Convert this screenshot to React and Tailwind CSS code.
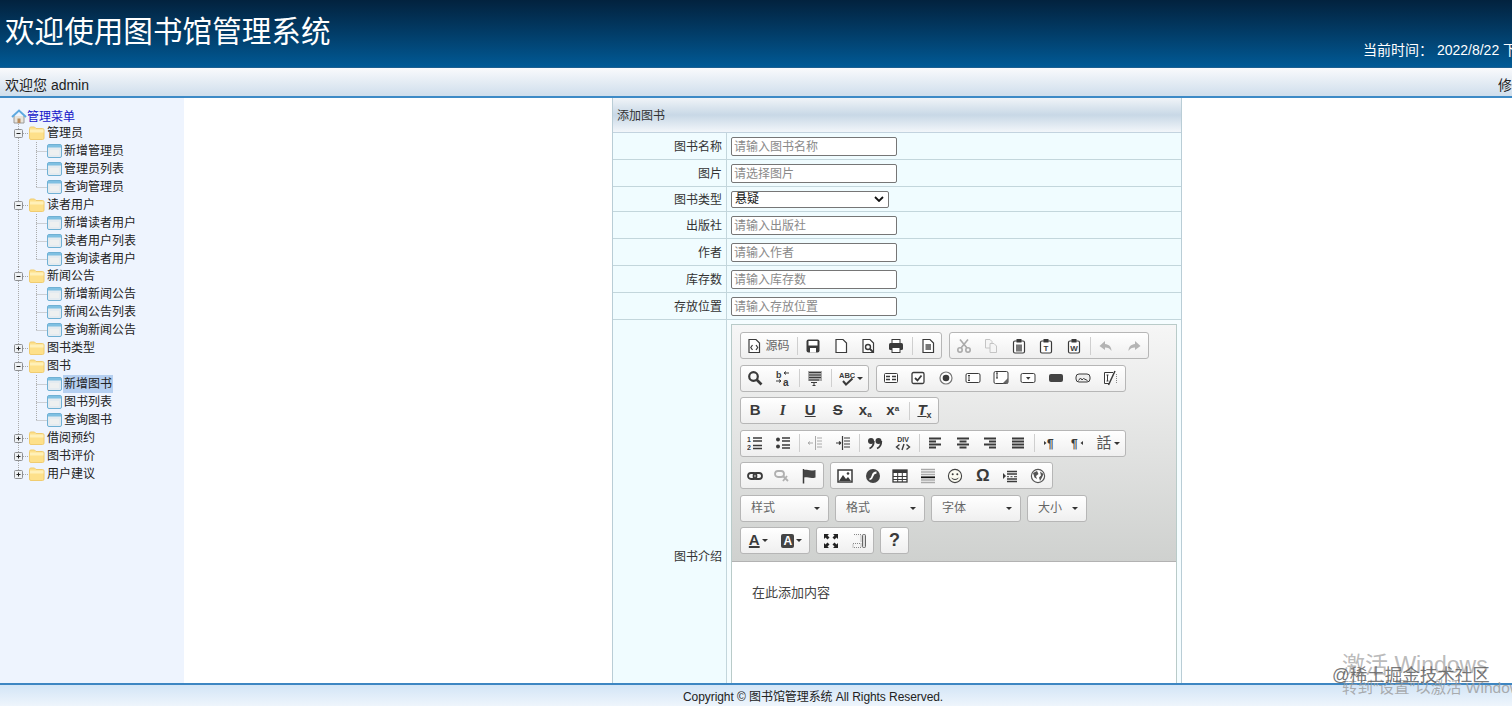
import React from "react";

const fontStack = "font-['Liberation_Sans','Noto_Sans_CJK_SC',sans-serif]";

const menu = [
  { name: "管理员", open: true, items: ["新增管理员", "管理员列表", "查询管理员"] },
  { name: "读者用户", open: true, items: ["新增读者用户", "读者用户列表", "查询读者用户"] },
  { name: "新闻公告", open: true, items: ["新增新闻公告", "新闻公告列表", "查询新闻公告"] },
  { name: "图书类型" },
  { name: "图书", open: true, items: ["新增图书", "图书列表", "查询图书"] },
  { name: "借阅预约" },
  { name: "图书评价" },
  { name: "用户建议", last: true },
];

const fields = [
  { label: "图书名称", hint: "请输入图书名称" },
  { label: "图片", hint: "请选择图片" },
  { label: "图书类型", select: true },
  { label: "出版社", hint: "请输入出版社" },
  { label: "作者", hint: "请输入作者" },
  { label: "库存数", hint: "请输入库存数" },
  { label: "存放位置", hint: "请输入存放位置" },
];

function Folder() {
  return (
    <svg width="16" height="14" viewBox="0 0 16 14" className="shrink-0">
      <path d="M0.5 2.5 Q0.5 1 2 1 H5.5 L7 2.5 H13.5 Q15 2.5 15 4 V12 Q15 13.5 13.5 13.5 H2 Q0.5 13.5 0.5 12 Z" fill="#fde08a" stroke="#f0cc70" />
      <rect x="1" y="3.5" width="13.5" height="3" fill="#fff0b8" />
    </svg>
  );
}

function Leaf() {
  return (
    <svg width="15" height="14" viewBox="0 0 15 14" className="shrink-0">
      <rect x="0.5" y="0.5" width="14" height="13" rx="1.5" fill="#e4ebf0" stroke="#6fb0d4" />
      <rect x="1" y="1" width="13" height="2.5" fill="#7fc0e2" />
      <rect x="3" y="6" width="9" height="5" fill="#eef0f0" />
    </svg>
  );
}

function GroupLine({ open, last }) {
  return (
    <svg width="29" height="18" viewBox="0 0 29 18" className="shrink-0">
      <path d={last ? "M18.5 0V9" : "M18.5 0V18"} stroke="#aaa" strokeDasharray="1 1" />
      <path d="M23 9.5H29" stroke="#aaa" strokeDasharray="1 1" />
      <rect x="14.5" y="5.5" width="8" height="8" rx="1" fill="#eef1f4" stroke="#8d8f92" />
      <path d="M16.5 9.5H20.5" stroke="#222" />
      {!open && <path d="M18.5 7.5V11.5" stroke="#222" />}
    </svg>
  );
}

function LeafLine({ end }) {
  return (
    <svg width="47" height="18" viewBox="0 0 47 18" className="shrink-0">
      <path d="M18.5 0V18" stroke="#aaa" strokeDasharray="1 1" />
      <path d={end ? "M36.5 0V9" : "M36.5 0V18"} stroke="#aaa" strokeDasharray="1 1" />
      <path d="M36.5 9.5H47" stroke="#aaa" strokeDasharray="1 1" />
    </svg>
  );
}

function Sidebar() {
  return (
    <aside className="w-[184px] shrink-0 bg-[#eef4fe] pt-[11px] text-[12px] text-[#222] leading-[18px]">
      <div className="flex h-[15px] items-center pl-[11px] text-[#1414c8]">
        <svg width="16" height="15" viewBox="0 0 16 15" className="shrink-0">
          <path d="M3 7V14H13V7" fill="#e8e4dc" stroke="#9a9a9a" />
          <path d="M1 8L8 1.5L15 8" fill="none" stroke="#5ea9e0" strokeWidth="2" />
          <rect x="6.5" y="9.5" width="3" height="4.5" fill="#b98a5a" />
        </svg>
        <span>管理菜单</span>
      </div>
      {menu.map((group) => (
        <div key={group.name}>
          <div className="flex h-[17.95px] items-center">
            <GroupLine open={group.open} last={group.last} />
            <Folder />
            <span className="ml-[2px] whitespace-nowrap">{group.name}</span>
          </div>
          {group.items &&
            group.items.map((item, i) => (
              <div key={item} className="flex h-[17.95px] items-center">
                <LeafLine end={i === group.items.length - 1} />
                <Leaf />
                <span
                  className={
                    "ml-[1px] whitespace-nowrap px-[1px] " +
                    (item === "新增图书" ? "bg-[#b5cff0]" : "")
                  }
                >
                  {item}
                </span>
              </div>
            ))}
        </div>
      ))}
    </aside>
  );
}

// CKEditor toolbar icons, 16 x 16 box
const dark = "#3a3a3a";
const icons = {
  source: (
    <>
      <path d="M3 1.5H10L13.5 5V14.5H3Z" fill="#fff" stroke={dark} strokeWidth="1.2" />
      <path d="M6.5 7L4.8 9.5L6.5 12M10 7L11.7 9.5L10 12" fill="none" stroke={dark} strokeWidth="1.2" />
    </>
  ),
  save: (
    <>
      <rect x="1.5" y="1.5" width="13" height="13" rx="2" fill={dark} />
      <rect x="3.5" y="3" width="9" height="4.5" fill="#fff" />
      <rect x="5" y="10" width="6" height="4.5" fill="#fff" />
    </>
  ),
  page: <path d="M3 1.5H10L13.5 5V14.5H3Z" fill="#fff" stroke={dark} strokeWidth="1.2" />,
  preview: (
    <>
      <path d="M3 1.5H10L13.5 5V14.5H3Z" fill="#fff" stroke={dark} strokeWidth="1.2" />
      <circle cx="8" cy="9" r="2.5" fill="none" stroke={dark} strokeWidth="1.4" />
      <path d="M10 11L13 14" stroke={dark} strokeWidth="1.8" />
    </>
  ),
  print: (
    <>
      <rect x="4" y="1.5" width="8" height="4" fill="#fff" stroke={dark} />
      <rect x="1" y="5" width="14" height="7" rx="1.5" fill={dark} />
      <rect x="4" y="9.5" width="8" height="5" fill="#fff" stroke={dark} />
    </>
  ),
  templates: (
    <>
      <path d="M3 1.5H10L13.5 5V14.5H3Z" fill="#fff" stroke={dark} strokeWidth="1.2" />
      <rect x="5.5" y="6" width="5.5" height="6" fill="#777" />
    </>
  ),
  cut: (
    <g stroke="#aaa" fill="none" strokeWidth="1.6">
      <path d="M4 1.5L11 10M12 1.5L5 10" />
      <circle cx="4" cy="12" r="2.2" />
      <circle cx="12" cy="12" r="2.2" />
    </g>
  ),
  copy: (
    <g stroke="#c4c4c4" fill="#f5f5f5">
      <path d="M2.5 1.5H7L9 3.5V10H2.5Z" />
      <path d="M7 5.5H11L13.5 8V14.5H7Z" />
    </g>
  ),
  paste: (
    <>
      <rect x="2.5" y="3" width="11" height="12" rx="1.5" fill="#fff" stroke={dark} strokeWidth="1.2" />
      <rect x="5.5" y="1" width="5" height="3.5" fill={dark} />
      <rect x="5" y="6.5" width="6" height="7" fill="#777" />
    </>
  ),
  undo: <path d="M7 3L1.5 8L7 12V9.5C10 9.5 12 10.5 13.5 13C13.5 9 11 6.3 7 6Z" fill="#b4b4b4" />,
  redo: <path d="M9 3L14.5 8L9 12V9.5C6 9.5 4 10.5 2.5 13C2.5 9 5 6.3 9 6Z" fill="#b4b4b4" />,
  find: (
    <>
      <circle cx="6.5" cy="6.5" r="4.3" fill="none" stroke={dark} strokeWidth="2.2" />
      <path d="M9.5 9.5L14.5 14.5" stroke={dark} strokeWidth="2.6" />
    </>
  ),
  replace: (
    <>
      <text x="1" y="7.5" fontSize="9" fontWeight="700" fill={dark}>b</text>
      <text x="8" y="15.5" fontSize="10" fontWeight="700" fill={dark}>a</text>
      <path d="M9 3H14M9 3L11 1.5M9 3L11 4.5M1 11H6M6 11L4 9.5M6 11L4 12.5" stroke={dark} fill="none" />
    </>
  ),
  selectAll: (
    <>
      <rect x="1" y="1" width="14" height="10" fill="#aaa" />
      <path d="M2 2.5H14M2 5H14M2 7.5H14M2 10H12M4 12.5H10M7 12V15.5M5.5 15.5H8.5" stroke={dark} fill="none" />
    </>
  ),
  spell: (
    <>
      <text x="0" y="7.5" fontSize="7.5" fontWeight="700" fill={dark}>ABC</text>
      <path d="M4 11L7 14.5L13.5 8.5" fill="none" stroke={dark} strokeWidth="2" />
    </>
  ),
  form: (
    <>
      <rect x="1.5" y="3.5" width="13" height="9" rx="1" fill="#fff" stroke={dark} />
      <path d="M3 6.5H7M3 9.5H7M9 6.5H13M9 9.5H13" stroke={dark} strokeWidth="1.6" />
    </>
  ),
  checkbox: (
    <>
      <rect x="2" y="2.5" width="12" height="11" rx="1.5" fill="#fff" stroke={dark} strokeWidth="1.3" />
      <path d="M5 8L7.5 10.5L11.5 5.5" fill="none" stroke={dark} strokeWidth="1.8" />
    </>
  ),
  radio: (
    <>
      <circle cx="8" cy="8" r="6" fill="#fff" stroke="#777" strokeWidth="1.2" />
      <circle cx="8" cy="8" r="3.3" fill={dark} />
    </>
  ),
  textInput: (
    <>
      <rect x="1" y="3.5" width="14" height="9" rx="1.5" fill="#fff" stroke={dark} />
      <path d="M4 5.5V10.5M3 5.5H5M3 10.5H5" stroke={dark} />
    </>
  ),
  textarea: (
    <>
      <rect x="1" y="1.5" width="14" height="12" rx="1.5" fill="#fff" stroke={dark} />
      <path d="M4 3V8M3 3H5M3 8H5" stroke={dark} />
      <path d="M15 8V13.5H9.5Z" fill="#666" />
    </>
  ),
  selectBox: (
    <>
      <rect x="1" y="3.5" width="14" height="9" rx="1.5" fill="#fff" stroke={dark} />
      <path d="M6 7H10.5L8.2 9.8Z" fill={dark} />
    </>
  ),
  button: <rect x="1" y="4" width="14" height="8" rx="2" fill="#444" />,
  imageButton: (
    <>
      <rect x="1" y="4" width="14" height="8" rx="3" fill="#eee" stroke={dark} />
      <path d="M3.5 10.5L5.5 8L7 10L8.5 8.5L12.5 10.5" fill="none" stroke={dark} />
    </>
  ),
  hidden: (
    <>
      <path d="M10 2.5H1.5V13.5H6" fill="#fff" stroke={dark} />
      <path d="M4.5 5V11M3.5 5H5.5M3.5 11H5.5" stroke={dark} />
      <path d="M5.5 15L12 1" stroke={dark} strokeWidth="1.5" />
      <path d="M13.5 4V13" stroke="#888" strokeDasharray="1 1" />
    </>
  ),
  listOl: (
    <>
      <text x="0" y="7" fontSize="7" fontWeight="700" fill={dark}>1</text>
      <text x="0" y="14.5" fontSize="7" fontWeight="700" fill={dark}>2</text>
      <path d="M6 3H15M6 6H15M6 10.5H15M6 13.5H15" stroke={dark} strokeWidth="1.3" />
    </>
  ),
  listUl: (
    <>
      <circle cx="3" cy="4.5" r="2" fill={dark} />
      <circle cx="3" cy="11.5" r="2" fill={dark} />
      <path d="M7 3H15M7 6H15M7 10H15M7 13H15" stroke={dark} strokeWidth="1.3" />
    </>
  ),
  outdent: (
    <g stroke="#aaa" fill="none">
      <path d="M8.5 1V15M10 3H15M10 6H15M10 9H15M10 12H15" />
      <path d="M1 8H6M1 8L3 6.5M1 8L3 9.5" />
    </g>
  ),
  indent: (
    <g stroke={dark} fill="none">
      <path d="M7.5 1V15M9 3H15M9 6H15M9 9H15M9 12H15" strokeWidth="1.2" />
      <path d="M1 8H6M6 8L4 6.5M6 8L4 9.5" strokeWidth="1.2" />
    </g>
  ),
  quote: (
    <>
      <circle cx="4" cy="6" r="3" fill={dark} />
      <path d="M6.8 6C6.8 10 5 12.5 2.5 13.5" fill="none" stroke={dark} strokeWidth="1.8" />
      <circle cx="11.5" cy="6" r="3" fill={dark} />
      <path d="M14.3 6C14.3 10 12.5 12.5 10 13.5" fill="none" stroke={dark} strokeWidth="1.8" />
    </>
  ),
  div: (
    <>
      <text x="8" y="7" fontSize="7" fontWeight="700" textAnchor="middle" fill={dark}>DIV</text>
      <path d="M4.5 9.5L1.5 12L4.5 14.5M11.5 9.5L14.5 12L11.5 14.5M9 9L7 15" fill="none" stroke={dark} strokeWidth="1.4" />
    </>
  ),
  alignLeft: <path d="M2 3.5H14M2 6.5H9M2 9.5H14M2 12.5H9" stroke={dark} strokeWidth="1.8" />,
  alignCenter: <path d="M2 3.5H14M4.5 6.5H11.5M2 9.5H14M4.5 12.5H11.5" stroke={dark} strokeWidth="1.8" />,
  alignRight: <path d="M2 3.5H14M7 6.5H14M2 9.5H14M7 12.5H14" stroke={dark} strokeWidth="1.8" />,
  alignJustify: <path d="M2 3.5H14M2 6.5H14M2 9.5H14M2 12.5H14" stroke={dark} strokeWidth="1.8" />,
  ltr: (
    <>
      <text x="5" y="12.5" fontSize="12" fontWeight="700" fill={dark}>¶</text>
      <path d="M2 6L4.5 8L2 10Z" fill={dark} />
    </>
  ),
  rtl: (
    <>
      <text x="1" y="12.5" fontSize="12" fontWeight="700" fill={dark}>¶</text>
      <path d="M13 6L10.5 8L13 10Z" fill={dark} />
    </>
  ),
  link: (
    <>
      <rect x="1" y="5" width="8.5" height="6" rx="3" fill="none" stroke={dark} strokeWidth="1.8" />
      <rect x="6.5" y="5" width="8.5" height="6" rx="3" fill="none" stroke={dark} strokeWidth="1.8" />
    </>
  ),
  unlink: (
    <g fill="none" stroke="#b0b0b0" strokeWidth="1.8">
      <rect x="1" y="3" width="9" height="6" rx="3" />
      <path d="M9 8L14 13M13 8L9 13" />
    </g>
  ),
  flag: (
    <>
      <path d="M2.5 1V15.5" stroke={dark} strokeWidth="1.5" />
      <path d="M3 2C6 1 8 3.5 14.5 2V9.5C9 11 6 8.5 3 9.5Z" fill="#444" />
    </>
  ),
  image: (
    <>
      <rect x="1" y="2" width="14" height="12" fill="#fff" stroke={dark} strokeWidth="1.5" />
      <path d="M2 13L6 7L9 11L11 9L14 13Z" fill={dark} />
      <circle cx="11" cy="5.5" r="1.3" fill={dark} />
    </>
  ),
  flash: (
    <>
      <circle cx="8" cy="8" r="7" fill="#444" />
      <path d="M11.5 4.5C8.5 4.5 8 6 7.5 8C7 10 6.5 11 4.5 11.5" fill="none" stroke="#fff" strokeWidth="1.8" />
    </>
  ),
  table: (
    <>
      <rect x="1" y="2" width="14" height="12" fill="#fff" stroke={dark} strokeWidth="1.3" />
      <rect x="1" y="2" width="14" height="3" fill={dark} />
      <path d="M1 8.5H15M1 11.5H15M5.7 5V14M10.3 5V14" stroke={dark} />
    </>
  ),
  rule: (
    <>
      <path d="M1 1.5H15M1 4H15M1 6.5H15M1 12H15M1 14.5H15" stroke="#aaa" strokeWidth="1.4" />
      <path d="M1 9.3H15" stroke="#111" strokeWidth="1.8" />
    </>
  ),
  smile: (
    <>
      <circle cx="8" cy="8" r="6.6" fill="#fafaf0" stroke="#444" strokeWidth="1.1" />
      <circle cx="5.7" cy="6.2" r="1" fill={dark} />
      <circle cx="10.3" cy="6.2" r="1" fill={dark} />
      <path d="M4.5 9.8C6 12 10 12 11.5 9.8" fill="none" stroke={dark} />
    </>
  ),
  pageBreak: (
    <>
      <path d="M1 5L4 8L1 11Z" fill={dark} />
      <path d="M5 3.5H15M5 6H15" stroke={dark} strokeWidth="1.7" />
      <path d="M5 8.7H7M8.5 8.7H10.5M12 8.7H15" stroke={dark} />
      <path d="M5 11H15M5 13.5H15" stroke={dark} strokeWidth="1.7" />
    </>
  ),
  globe: (
    <>
      <circle cx="8" cy="8" r="6.6" fill="#fff" stroke="#555" strokeWidth="1.2" />
      <path d="M3 5L7 3L8.5 6L6 8L7 11L4.5 9.5ZM10 3.5L13.5 6L12 9.5L10 13L9 9.5L11 7.5Z" fill="#555" />
    </>
  ),
  maximize: (
    <path d="M1 1H6L4.5 2.5L6.5 4.5L4.5 6.5L2.5 4.5L1 6ZM15 1V6L13.5 4.5L11.5 6.5L9.5 4.5L11.5 2.5L10 1ZM1 15V10L2.5 11.5L4.5 9.5L6.5 11.5L4.5 13.5L6 15ZM15 15H10L11.5 13.5L9.5 11.5L11.5 9.5L13.5 11.5L15 10Z" fill="#222" />
  ),
  blocks: (
    <>
      <path d="M3 1.5H10V9M2 10.5H10V14.5H2Z" fill="#f5f5f5" stroke="#888" strokeDasharray="1 1" />
      <rect x="11.5" y="1.5" width="3" height="13" rx="1" fill="#ddd" stroke="#666" />
    </>
  ),
};

function PasteText({ letter }) {
  return (
    <svg width="16" height="16" viewBox="0 0 16 16">
      <rect x="2.5" y="3" width="11" height="12" rx="1.5" fill="#fff" stroke={dark} strokeWidth="1.2" />
      <rect x="5.5" y="1" width="5" height="3.5" fill={dark} />
      <text x="8" y="13" fontSize="8" fontWeight="700" textAnchor="middle" fill={dark}>{letter}</text>
    </svg>
  );
}

function Btn({ name, children, w = "w-[27.5px]" }) {
  return (
    <div className={"flex h-full items-center justify-center shrink-0 " + w}>
      {name ? (
        <svg width="16" height="16" viewBox="0 0 16 16">
          {icons[name]}
        </svg>
      ) : (
        children
      )}
    </div>
  );
}

const Sep = () => <div className="mx-[2px] h-[18px] w-px shrink-0 bg-[#cfcfcf]" />;
const Caret = () => (
  <span className="ml-[2px] h-0 w-0 border-x-[3px] border-t-[3px] border-x-transparent border-t-[#333]" />
);

function Group({ children, className = "" }) {
  return (
    <div className={"flex h-[27px] items-center rounded-[3px] border border-[#b6b6b6] bg-gradient-to-b from-white to-[#efefef] px-[0.5px] " + className}>
      {children}
    </div>
  );
}

function Combo({ label, w }) {
  return (
    <div className={"flex h-[27px] items-center justify-between rounded-[3px] border border-[#b6b6b6] bg-gradient-to-b from-white to-[#efefef] pl-[10px] pr-[8px] text-[12px] text-[#666] " + w}>
      <span>{label}</span>
      <span className="h-0 w-0 border-x-[3px] border-t-[3px] border-x-transparent border-t-[#333]" />
    </div>
  );
}

function Toolbar() {
  const glyph = "text-[15px] font-bold text-[#3a3a3a] font-['Liberation_Sans',sans-serif]";
  return (
    <div className="flex flex-col gap-[5.5px] border-b border-[#b2b2b2] bg-gradient-to-b from-[#f6f6f6] to-[#cfd1cf] pb-[7px] pl-[8px] pt-[7px]">
      <div className="flex gap-[6.5px]">
        <Group>
          <div className="flex h-full w-[53px] items-center justify-center gap-[3px] text-[12px] text-[#666]">
            <svg width="16" height="16" viewBox="0 0 16 16">{icons.source}</svg>
            <span>源码</span>
          </div>
          <Sep />
          <Btn name="save" />
          <Btn name="page" />
          <Btn name="preview" />
          <Btn name="print" />
          <Sep />
          <Btn name="templates" w="w-[26px]" />
        </Group>
        <Group>
          <Btn name="cut" />
          <Btn name="copy" />
          <Btn name="paste" />
          <Btn><PasteText letter="T" /></Btn>
          <Btn><PasteText letter="W" /></Btn>
          <Sep />
          <Btn name="undo" />
          <Btn name="redo" />
        </Group>
      </div>
      <div className="flex gap-[7px]">
        <Group>
          <Btn name="find" />
          <Btn name="replace" />
          <Sep />
          <Btn name="selectAll" />
          <Sep />
          <Btn w="w-[33px]">
            <svg width="16" height="16" viewBox="0 0 16 16">{icons.spell}</svg>
            <Caret />
          </Btn>
        </Group>
        <Group>
          {["form", "checkbox", "radio", "textInput", "textarea", "selectBox", "button", "imageButton", "hidden"].map((n) => (
            <Btn key={n} name={n} />
          ))}
        </Group>
      </div>
      <div className="flex gap-[7px]">
        <Group>
          <Btn><span className={glyph}>B</span></Btn>
          <Btn><span className={glyph + " italic font-['Liberation_Serif',serif]"}>I</span></Btn>
          <Btn><span className={glyph + " underline"}>U</span></Btn>
          <Btn><span className={glyph + " line-through"}>S</span></Btn>
          <Btn><span className={glyph}>x<sub className="text-[8px]">a</sub></span></Btn>
          <Btn><span className={glyph}>x<sup className="text-[8px]">a</sup></span></Btn>
          <Sep />
          <Btn w="w-[26px]"><span className={glyph + " italic underline"}>T<sub className="text-[9px] not-italic">x</sub></span></Btn>
        </Group>
      </div>
      <div className="flex gap-[7px]">
        <Group>
          <Btn name="listOl" />
          <Btn name="listUl" />
          <Sep />
          <Btn name="outdent" />
          <Btn name="indent" />
          <Sep />
          <Btn name="quote" />
          <Btn name="div" />
          <Sep />
          <Btn name="alignLeft" />
          <Btn name="alignCenter" />
          <Btn name="alignRight" />
          <Btn name="alignJustify" />
          <Sep />
          <Btn name="ltr" />
          <Btn name="rtl" />
          <Btn w="w-[33px]">
            <span className="text-[15px] text-[#555]">話</span>
            <Caret />
          </Btn>
        </Group>
      </div>
      <div className="flex gap-[6px]">
        <Group>
          <Btn name="link" w="w-[27px]" />
          <Btn name="unlink" w="w-[27px]" />
          <Btn name="flag" w="w-[27px]" />
        </Group>
        <Group>
          {["image", "flash", "table", "rule", "smile"].map((n) => (
            <Btn key={n} name={n} />
          ))}
          <Btn><span className="text-[17px] font-bold text-[#3a3a3a] font-['Liberation_Sans',sans-serif]">Ω</span></Btn>
          <Btn name="pageBreak" />
          <Btn name="globe" />
        </Group>
      </div>
      <div className="flex gap-[6px]">
        <Combo label="样式" w="w-[89px]" />
        <Combo label="格式" w="w-[90px]" />
        <Combo label="字体" w="w-[90px]" />
        <Combo label="大小" w="w-[60px]" />
      </div>
      <div className="flex gap-[6px]">
        <Group>
          <Btn w="w-[33.5px]">
            <span className={glyph + " underline decoration-2"}>A</span>
            <Caret />
          </Btn>
          <Btn w="w-[33.5px]">
            <span className="rounded-[2px] bg-[#444] px-[2px] text-[12px] font-bold leading-[14px] text-white font-['Liberation_Sans',sans-serif]">A</span>
            <Caret />
          </Btn>
        </Group>
        <Group>
          <Btn name="maximize" />
          <Btn name="blocks" />
        </Group>
        <Group>
          <Btn w="w-[26px]"><span className="text-[18px] font-bold text-[#3a3a3a] font-['Liberation_Sans',sans-serif]">?</span></Btn>
        </Group>
      </div>
    </div>
  );
}

function FormTable() {
  return (
    <div className="ml-[428px] w-[570px] border-x border-[#b9cdd6] text-[12px] text-[#333]">
      <div className="flex h-[35px] items-center border-b border-[#c3d3df] bg-gradient-to-b from-[#f0f4f8] via-[#c8d8e6] to-[#f2f6fa] pl-[4px] pt-[2px]">
        添加图书
      </div>
      {fields.map((f) => (
        <div key={f.label} className={"flex border-b border-[#c3d6dc] " + (f.select ? "h-[25px]" : "h-[27px]")}>
          <div className="flex w-[114px] items-center justify-end border-r border-[#c3d6dc] bg-[#f0fcff] pr-[4px] pt-[2px]">
            {f.label}
          </div>
          <div className="flex flex-1 items-center bg-[#f0fcff] pl-[4px]">
            {f.select ? (
              <div className="flex h-[17px] w-[158px] items-center justify-between rounded-[2px] border border-[#767676] bg-white pl-[3px] pr-[4px] text-[#111]">
                <span>悬疑</span>
                <svg width="10" height="6" viewBox="0 0 10 6">
                  <path d="M1 1L5 5L9 1" fill="none" stroke="#111" strokeWidth="1.8" />
                </svg>
              </div>
            ) : (
              <input
                readOnly
                placeholder={f.hint}
                className="h-[19px] w-[166px] rounded-[2px] border border-[#767676] bg-white pl-[2px] pr-[3px] pt-[1px] text-[12px] outline-none placeholder:text-[#8a8a8a]"
              />
            )}
          </div>
        </div>
      ))}
      <div className="flex h-[380px]">
        <div className="flex h-[474px] w-[114px] shrink-0 items-center justify-end border-r border-[#c3d6dc] bg-[#f0fcff] pr-[4px]">
          图书介绍
        </div>
        <div className="flex-1 bg-[#f5fdff] pl-[4px] pr-[4px] pt-[4px]">
          <div className="h-[470px] border border-[#b9cbc9] bg-white">
            <Toolbar />
            <p className="pl-[20px] pt-[21px] text-[13px] leading-[20px] text-[#444]">在此添加内容</p>
          </div>
        </div>
      </div>
    </div>
  );
}

export default function App() {
  return (
    <div className={"relative flex h-[706px] flex-col overflow-hidden bg-white " + fontStack}>
      <header className="flex h-[68px] shrink-0 border-b border-[#1c5f90] bg-gradient-to-b from-[#02223e] to-[#005a96] text-white">
        <h1 className="pl-[5px] pt-[10px] text-[29.6px] font-normal leading-[44px]">欢迎使用图书馆管理系统</h1>
        <div className="ml-auto w-[149px] overflow-hidden whitespace-nowrap pt-[40px] text-[14px] leading-[20px]">
          当前时间： 2022/8/22 下午
        </div>
      </header>
      <div className="flex h-[30px] shrink-0 items-center border-b-2 border-[#3d8ac6] bg-gradient-to-b from-[#f9fafc] to-[#cfdeec] pl-[5px] pt-[6px] text-[14px] text-[#222]">
        <span>欢迎您 admin</span>
        <span className="ml-auto w-[14px] overflow-hidden whitespace-nowrap">修改密码</span>
      </div>
      <main className="flex min-h-0 flex-1 overflow-hidden">
        <Sidebar />
        <FormTable />
      </main>
      <footer className="flex h-[23px] shrink-0 items-center border-t-2 border-[#3d86c2] bg-gradient-to-b from-[#d3e5f6] to-[#eef5fc] pl-[683px] pt-[2px] text-[12px] tracking-[-0.07px] text-[#222]">
        Copyright © 图书馆管理系统 All Rights Reserved.
      </footer>
      {/* watermarks sitting over the page */}
      <div className="pointer-events-none absolute left-[1342px] top-[651px] whitespace-nowrap text-[23px] leading-[28px] text-[#a8a8a8]/80">
        激活 Windows
      </div>
      <div className="pointer-events-none absolute left-[1342px] top-[679px] whitespace-nowrap text-[15.5px] leading-[18px] text-[#9a9a9a]/80">
        转到"设置"以激活 Windows。
      </div>
      <div className="pointer-events-none absolute left-[1332px] top-[665px] whitespace-nowrap text-[17.5px] leading-[20px] text-[#555]/80">
        @稀土掘金技术社区
      </div>
    </div>
  );
}
